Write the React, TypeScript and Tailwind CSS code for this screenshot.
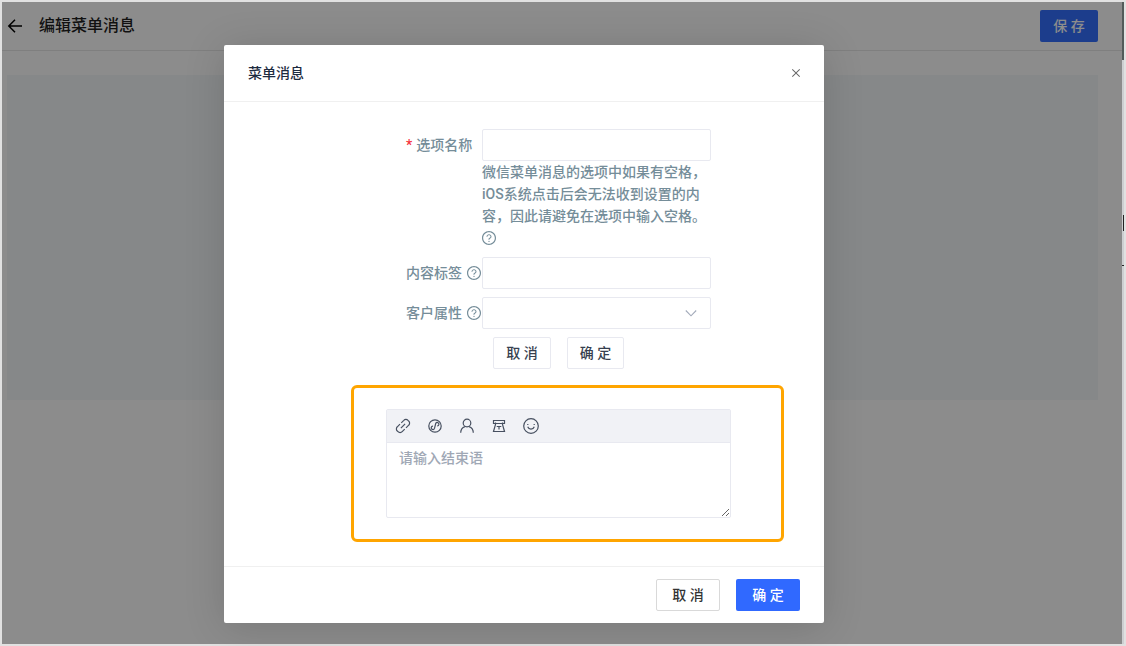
import React from 'react'
import { AiOutlineClose, AiOutlineQuestionCircle } from 'react-icons/ai'

const tools = [
  {
    name: '链接',
    icon: (
      <>
        <path d="M6.300 4.800 8.800 2.300a2.900 2.900 0 0 1 4.200 0l.7.7a2.900 2.900 0 0 1 0 4.200L11 9.900" />
        <path d="M9.700 11.200 7.200 13.700a2.900 2.900 0 0 1-4.200 0l-.7-.7a2.900 2.900 0 0 1 0-4.200L5 6.100" />
        <path d="M5.900 10.100l4.200-4.200" />
      </>
    ),
  },
  {
    name: '小程序',
    icon: (
      <>
        <circle cx="8" cy="8" r="6.200" />
        <path d="M6 8.100a1.700 1.700 0 1 0 1.500 2.300L8.700 5.500a1.700 1.700 0 1 1 1.500 2.400" />
      </>
    ),
  },
  {
    name: '客户',
    icon: (
      <>
        <circle cx="8" cy="5" r="3.800" />
        <path d="M1.700 14.800c0-3.200 1.700-5.300 4.300-6.200M14.300 14.800c0-3.200-1.700-5.300-4.300-6.200" />
      </>
    ),
  },
  {
    name: '电话',
    icon: (
      <>
        <path d="M4.500 5.500h-2v-3h11v3h-2" />
        <path d="M4.500 4.500v2L2.500 13.500h11L11.500 6.500v-2" />
        <path d="M4.500 5.500h7M5.700 8.500h4.600M8 8.500v3" />
      </>
    ),
  },
  {
    name: '表情',
    icon: (
      <>
        <circle cx="8" cy="8" r="7.300" />
        <path d="M4.200 6.500h1.200M10.600 6.500h1.200M4.700 8.700c.7 1.700 1.900 2.500 3.300 2.500s2.600-.8 3.300-2.500" />
      </>
    ),
  },
]

function Help({ label }: { label: string }) {
  return (
    <button type="button" aria-label={label} className="-mx-px block">
      <AiOutlineQuestionCircle className="size-4" />
    </button>
  )
}

function Background() {
  return (
    <div className="flex-1 bg-white">
      <header className="flex h-[49px] items-center border-b border-[#e8e8e8] pl-[5px] pr-6 text-[#1f1f1f]">
        <button type="button" aria-label="返回">
          <svg viewBox="0 0 16 16" className="size-4" fill="none" stroke="black" strokeWidth="1.5">
            <path d="M15 8H2M8 1.800 1.800 8 8 14.200" />
          </svg>
        </button>
        <h1 className="ml-4 text-base font-medium">编辑菜单消息</h1>
        <button type="button" className="ml-auto h-8 w-[58px] rounded-xs bg-[#3370ff] text-sm font-medium text-white">保 存</button>
      </header>
      <div className="ml-[5px] mr-6 mt-6 h-[325px] bg-[#f4f7fa]" />
    </div>
  )
}

function OptionForm() {
  const field = 'h-8 w-full rounded-xs border border-[#e8e9f0] bg-white px-3 outline-none'
  return (
    <form className="ml-[55px] flex w-[305px] flex-col gap-2 text-[#758d99]">
      <div className="flex">
        <label htmlFor="name" className="w-[76px] shrink-0 leading-8">
          <span className="mr-1 text-[#f5323c]">*</span>选项名称
        </label>
        <div className="flex-1">
          <input id="name" className={field} />
          <p>微信菜单消息的选项中如果有空格，iOS系统点击后会无法收到设置的内容，因此请避免在选项中输入空格。</p>
          <div className="flex h-[22px] items-center">
            <Help label="空格说明" />
          </div>
        </div>
      </div>
      <div className="flex items-center">
        <div className="flex w-[76px] shrink-0 items-center gap-[5px]">
          <label htmlFor="tag">内容标签</label>
          <Help label="内容标签说明" />
        </div>
        <input id="tag" className={field} />
      </div>
      <div className="flex items-center">
        <div className="flex w-[76px] shrink-0 items-center gap-[5px]">
          <label htmlFor="attr">客户属性</label>
          <Help label="客户属性说明" />
        </div>
        <div className="relative flex-1">
          <select id="attr" className={`${field} appearance-none`} />
          <svg
            viewBox="0 0 12 12"
            className="pointer-events-none absolute right-[14px] top-[10px] size-3"
            fill="none"
            stroke="#a3abba"
            strokeWidth="1.1"
          >
            <path d="M.8 3.500 6 8.800l5.200-5.300" />
          </svg>
        </div>
      </div>
      <div className="flex gap-4 pl-[87px] text-[#373f4f]">
        <button type="button" className="h-8 w-[58px] rounded-xs border border-[#e8e9f0] font-medium">取 消</button>
        <button type="button" className="h-8 w-[57px] rounded-xs border border-[#e8e9f0] font-medium">确 定</button>
      </div>
    </form>
  )
}

function Editor() {
  return (
    <div className="mt-4 rounded-md border-3 border-[#ffa500] py-[21px] pl-8 pr-[50px]">
      <div className="rounded-xs border border-[#e8e9f0]">
        <div className="flex h-[33px] items-center gap-4 border-b border-[#e8e9f0] bg-[#f1f2f6] px-2 text-[#475060]">
          {tools.map((tool) => (
            <button key={tool.name} type="button" aria-label={tool.name}>
              <svg viewBox="0 0 16 16" className="size-4" fill="none" stroke="currentColor" strokeWidth="1.2">
                {tool.icon}
              </svg>
            </button>
          ))}
        </div>
        <textarea
          aria-label="结束语"
          placeholder="请输入结束语"
          className="block h-[74px] w-full resize px-3 py-1 outline-none placeholder:text-[#a0a8b5]"
        />
      </div>
    </div>
  )
}

function App() {
  return (
    <div className="relative flex min-h-screen bg-[#e1e1e1] p-[2px] font-[Roboto,'Noto_Sans_CJK_SC',sans-serif] text-sm/[22px] font-medium">
      <Background />
      <div className="flex w-[2px] flex-col items-end bg-[#cdcfd1]">
        <div className="h-[58px] w-full bg-[#525b5a]" />
        <div className="mt-[155px] h-4 w-px bg-[#222]" />
        <div className="mt-[34px] h-px w-full bg-[#222]" />
      </div>
      <div className="absolute inset-[2px] right-1 flex items-start justify-center bg-black/45 pr-[76px] pt-[43px]">
        <section role="dialog" aria-labelledby="title" className="w-[600px] rounded-xs bg-white shadow-[0_4px_40px_rgba(0,0,0,0.15)]">
          <header className="flex h-[57px] items-center justify-between border-b border-[#f0f0f0] px-6">
            <h2 id="title" className="text-[#1d2b40]">菜单消息</h2>
            <button type="button" aria-label="关闭" className="-mr-[2px] text-[#666]">
              <AiOutlineClose className="size-3" />
            </button>
          </header>
          <div className="pb-6 pl-[127px] pr-10 pt-[27px]">
            <OptionForm />
            <Editor />
          </div>
          <footer className="flex justify-end gap-4 border-t border-[#f0f0f0] px-6 py-3">
            <button type="button" className="h-8 w-16 rounded-xs border border-[#d9d9d9] text-[#333]">取 消</button>
            <button type="button" className="h-8 w-16 rounded-xs bg-[#3069ff] text-white">确 定</button>
          </footer>
        </section>
      </div>
    </div>
  )
}

export default App
